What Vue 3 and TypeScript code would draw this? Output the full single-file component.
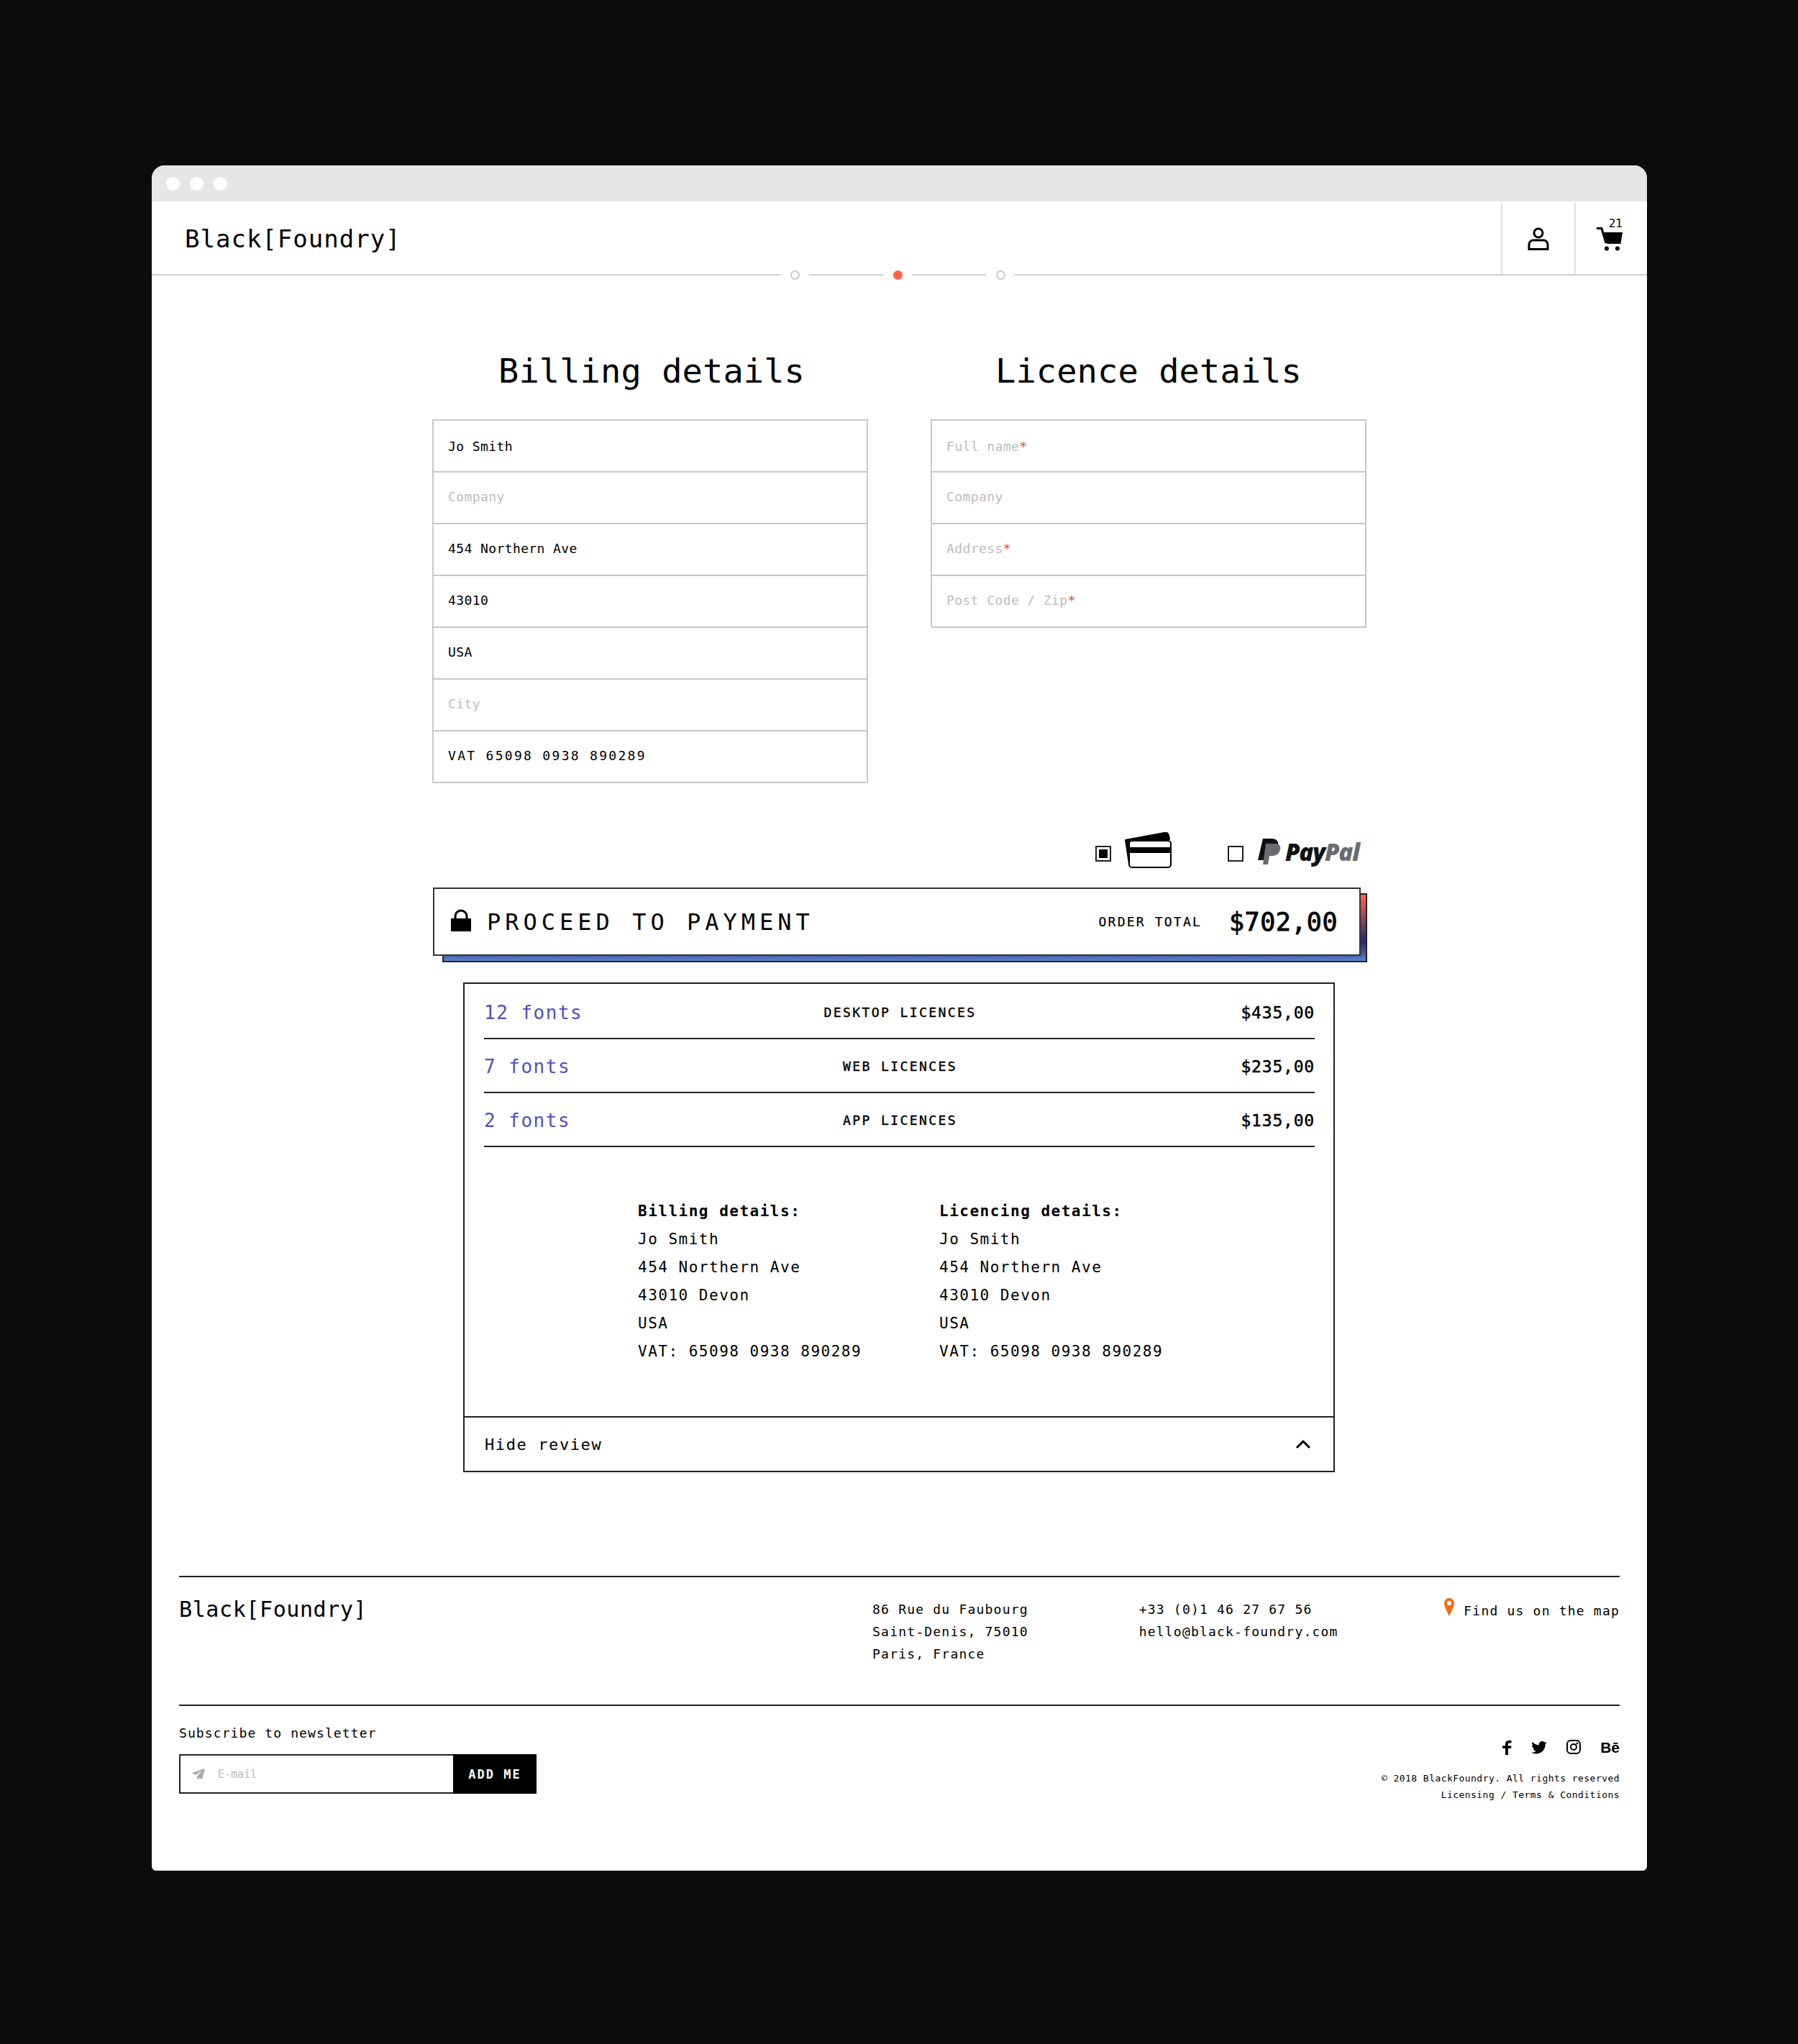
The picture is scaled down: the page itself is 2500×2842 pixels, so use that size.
<template>
  <div class="page">
    <div class="window">
      <div class="titlebar">
        <span v-for="i in 3" :key="i" class="light"></span>
      </div>

      <header class="topbar">
        <div class="logo">Black[Foundry]</div>
        <div class="top-icons">
          <div class="icon-cell">
            <svg width="30" height="32" viewBox="0 0 30 32" fill="none" stroke="#000" stroke-width="3">
              <circle cx="15" cy="8" r="6" />
              <path d="M2 30.5V24a6 6 0 0 1 6-6h14a6 6 0 0 1 6 6v6.500z" />
            </svg>
          </div>
          <div class="icon-cell cart">
            <span class="cart-count">21</span>
            <svg class="cart-icon" width="36" height="33" viewBox="0 0 36 33">
              <path d="M0 1.500h7l6 20.500" fill="none" stroke="#000" stroke-width="3" />
              <path d="M10 7h26l-2.500 16h-19z" fill="#000" />
              <circle cx="14" cy="29.500" r="3" fill="#000" />
              <circle cx="29" cy="29.500" r="3" fill="#000" />
            </svg>
          </div>
        </div>
      </header>

      <div class="steps">
        <span class="step-line first"></span>
        <span class="dot"></span>
        <span class="step-line"></span>
        <span class="dot active"></span>
        <span class="step-line"></span>
        <span class="dot"></span>
        <span class="step-line grow"></span>
      </div>

      <main class="content">
        <div class="forms">
          <section v-for="form in forms" :key="form.title" class="form-col">
            <h2>{{ form.title }}</h2>
            <div class="fields">
              <div v-for="f in form.fields" :key="f.label" class="field" :class="{ empty: !f.value, wide: f.wide }">
                {{ f.value || f.label }}<span v-if="f.required" class="req">*</span>
              </div>
            </div>
          </section>
        </div>

        <div class="pay-methods">
          <div class="method">
            <span class="check on"></span>
            <svg class="card" width="68" height="50" viewBox="0 0 68 50">
              <path d="M3 11 57 1q5-1 6 4l1 5H14v34h-6z" fill="#000" stroke="#000" stroke-width="2" stroke-linejoin="round" />
              <rect x="8" y="12" width="58" height="37" rx="4" fill="#fff" stroke="#000" stroke-width="2" />
              <rect x="8" y="21" width="58" height="8" fill="#000" />
            </svg>
          </div>
          <div class="method">
            <span class="check"></span>
            <svg class="pp-mark" width="32" height="36" viewBox="0 0 32 36">
              <path d="M7 0h12c7 0 10 4 9 9-1 7-6 10-12 10h-5l-2 11H0z" fill="#111" />
              <path d="M11 7h13c6 0 8 3 7 8-1 6-6 9-11 9h-4l-2 12H7z" fill="#6b6b70" />
            </svg>
            <span class="paypal"><b>Pay</b><i>Pal</i></span>
          </div>
        </div>

        <div class="proceed-wrap">
          <div class="proceed-shadow"></div>
          <div class="proceed">
            <svg class="lock" width="30" height="32" viewBox="0 0 30 32">
              <path d="M7 15V10a8 8 0 0 1 16 0v5" fill="none" stroke="#000" stroke-width="3" />
              <rect x="1" y="13" width="28" height="18" fill="#000" />
            </svg>
            <span class="proceed-label">PROCEED TO PAYMENT</span>
            <span class="order-label">ORDER TOTAL</span>
            <span class="order-total">$702,00</span>
          </div>
        </div>

        <div class="review">
          <div class="lines">
            <div v-for="l in lines" :key="l.type" class="line">
              <span class="line-count">{{ l.count }}</span>
              <span class="line-type">{{ l.type }}</span>
              <span class="line-price">{{ l.price }}</span>
            </div>
          </div>
          <div class="summary">
            <div v-for="s in summaries" :key="s.title" class="summary-col">
              <strong>{{ s.title }}</strong>
              <span v-for="row in address" :key="row">{{ row }}</span>
            </div>
          </div>
          <div class="hide-row">
            <span>Hide review</span>
            <svg width="22" height="14" viewBox="0 0 22 14" fill="none" stroke="#000" stroke-width="3">
              <path d="M2 12l9-9 9 9" />
            </svg>
          </div>
        </div>
      </main>

      <footer class="footer">
        <div class="foot-top">
          <div class="foot-logo">Black[Foundry]</div>
          <div class="foot-addr">86 Rue du Faubourg<br />Saint-Denis, 75010<br />Paris, France</div>
          <div class="foot-contact">+33 (0)1 46 27 67 56<br />hello@black-foundry.com</div>
          <div class="foot-map">
            <svg width="14" height="25" viewBox="0 0 14 25">
              <path fill-rule="evenodd" d="M7 0a7 7 0 0 1 7 7c0 4-4 12-7 18C4 19 0 11 0 7a7 7 0 0 1 7-7zm0 4a3 3 0 1 0 0 6 3 3 0 0 0 0-6z" fill="#f56a0e" />
            </svg>
            <span>Find us on the map</span>
          </div>
        </div>
        <div class="foot-bottom">
          <div class="subscribe">
            <div class="sub-title">Subscribe to newsletter</div>
            <div class="sub-form">
              <div class="sub-input">
                <svg width="18" height="16" viewBox="0 0 18 16">
                  <path d="M18 0 0 6l5 3 9-6-7 8v5l3-3 4 2z" fill="#aaa" />
                </svg>
                <span>E-mail</span>
              </div>
              <div class="sub-btn">ADD ME</div>
            </div>
          </div>
          <div class="foot-right">
            <div class="socials">
              <svg width="13" height="20" viewBox="0 0 13 20">
                <path d="M4 20v-9H0V7.500h4V5c0-3.400 2-5 5-5h3.500v3.500H10c-1.400 0-2 .6-2 2v2h4.500L12 11H8v9z" fill="#000" />
              </svg>
              <svg width="22" height="18" viewBox="0 0 24 20">
                <path d="M24 2.400c-.9.400-1.800.7-2.800.8 1-.6 1.800-1.600 2.200-2.700-1 .6-2 1-3.100 1.200A4.900 4.900 0 0 0 11.900 6.200C7.800 6 4.200 4 1.700.9c-1.300 2.200-.6 5.100 1.500 6.500-.8 0-1.500-.2-2.200-.6 0 2.300 1.600 4.400 3.900 4.900-.7.200-1.500.2-2.200.1.600 2 2.400 3.400 4.600 3.400A9.900 9.900 0 0 1 0 17.200 14 14 0 0 0 21.500 4.800c1-.7 1.800-1.500 2.500-2.400z" fill="#000" />
              </svg>
              <svg class="insta" width="20" height="20" viewBox="0 0 20 20" fill="none" stroke="#000" stroke-width="2">
                <rect x="1" y="1" width="18" height="18" rx="5" />
                <circle cx="10" cy="10" r="4" />
                <circle cx="15" cy="5" r=".6" fill="#000" />
              </svg>
              <span class="behance">Bē</span>
            </div>
            <div class="legal">© 2018 BlackFoundry. All rights reserved</div>
            <div class="legal">Licensing / Terms &amp; Conditions</div>
          </div>
        </div>
      </footer>
    </div>
  </div>
</template>

<script setup lang="ts">
interface Field {
  label: string;
  value?: string;
  required?: boolean;
  wide?: boolean;
}

const forms: { title: string; fields: Field[] }[] = [
  {
    title: "Billing details",
    fields: [
      { label: "Name", value: "Jo Smith" },
      { label: "Company" },
      { label: "Address", value: "454 Northern Ave" },
      { label: "Zip", value: "43010" },
      { label: "Country", value: "USA" },
      { label: "City" },
      { label: "VAT", value: "VAT 65098 0938 890289", wide: true },
    ],
  },
  {
    title: "Licence details",
    fields: [
      { label: "Full name", required: true },
      { label: "Company" },
      { label: "Address", required: true },
      { label: "Post Code / Zip", required: true },
    ],
  },
];

const lines = [
  { count: "12 fonts", type: "DESKTOP LICENCES", price: "$435,00" },
  { count: "7 fonts", type: "WEB LICENCES", price: "$235,00" },
  { count: "2 fonts", type: "APP LICENCES", price: "$135,00" },
];

const summaries = [{ title: "Billing details:" }, { title: "Licencing details:" }];
const address = ["Jo Smith", "454 Northern Ave", "43010 Devon", "USA", "VAT: 65098 0938 890289"];
</script>

<style>
html,
body {
  margin: 0;
  background: #0c0c0c;
}
</style>

<style scoped>
.page {
  height: 2842px;
  box-sizing: border-box;
  padding: 230px 210px 0 211px;
  font-family: "DejaVu Sans Mono", monospace;
  color: #000;
}

.window {
  height: 2371px;
  background: #fff;
  border-radius: 18px 18px 6px 6px;
  overflow: hidden;
  display: flex;
  flex-direction: column;
}

.titlebar {
  height: 50px;
  background: #e6e6e6;
  display: flex;
  align-items: center;
  gap: 14px;
  padding: 0 0 0 20px;
  flex: none;
}

.light {
  width: 19px;
  height: 19px;
  border-radius: 50%;
  background: #fff;
}

.topbar {
  height: 101px;
  display: flex;
  align-items: center;
  justify-content: space-between;
  padding-left: 46px;
  flex: none;
}

.logo {
  font-size: 34px;
  letter-spacing: 1px;
  line-height: 1;
  margin-top: 3px;
}

.top-icons {
  display: flex;
  height: 100%;
  padding-top: 2px;
  box-sizing: border-box;
}

.icon-cell {
  position: relative;
  width: 102px;
  box-sizing: border-box;
  border-left: 2px solid #e0e0e0;
  display: flex;
  align-items: center;
  justify-content: center;
}

.icon-cell.cart {
  width: 101px;
  padding-top: 2px;
}

.cart-icon {
  margin-right: 5px;
}

.cart-count {
  position: absolute;
  top: 19px;
  right: 34px;
  font-size: 16px;
}

.steps {
  height: 14px;
  margin-top: -6px;
  display: flex;
  align-items: center;
  flex: none;
}

.step-line {
  width: 103px;
  height: 2px;
  background: #ccc;
}

.step-line.first {
  width: 874px;
}

.step-line.grow {
  flex: 1;
}

.dot {
  width: 13px;
  height: 13px;
  box-sizing: border-box;
  border: 2px solid #c8c8c8;
  border-radius: 50%;
  margin: 0 13.5px;
}

.dot.active {
  background: #ff6347;
  border-color: #ff6347;
}

.content {
  flex: none;
  padding-top: 97px;
  display: flex;
  flex-direction: column;
  align-items: flex-start;
}

.forms {
  display: flex;
  gap: 87px;
  margin-left: 390px;
  height: 633px;
}

.form-col {
  width: 606px;
}

.form-col:first-child h2 {
  padding-left: 4px;
}

h2 {
  margin: 0 0 37px;
  font-size: 47px;
  font-weight: 400;
  letter-spacing: 0.1px;
  line-height: 60px;
  text-align: center;
}

.fields {
  border: 2px solid #c8c8c8;
}

.field {
  height: 72px;
  box-sizing: border-box;
  border-bottom: 2px solid #c8c8c8;
  padding: 0 0 3px 20px;
  display: flex;
  align-items: center;
  font-size: 18px;
  letter-spacing: 0.4px;
}

.field:first-child {
  padding-bottom: 0;
}

.field:last-child {
  height: 70px;
  border-bottom: 0;
}

.field.empty {
  color: #bdbdbd;
}

.field.wide {
  letter-spacing: 2.3px;
}

.req {
  color: #e5453a;
}

.pay-methods {
  margin: 36px 0 0 1312px;
  height: 60px;
  display: flex;
  gap: 77px;
}

.method {
  display: flex;
  align-items: center;
  gap: 17px;
}

.card {
  margin-top: -6px;
}

.pp-mark {
  margin-left: 3px;
  margin-top: -2px;
}

.check {
  width: 22px;
  height: 22px;
  box-sizing: border-box;
  border: 2px solid #222;
  margin-top: 4px;
}

.check.on {
  padding: 3px;
  background: #000;
  background-clip: content-box;
}

.paypal {
  font-family: "Open Sans", sans-serif;
  font-size: 33px;
  font-weight: 800;
  font-style: italic;
  margin-left: -11px;
  margin-top: -2px;
  letter-spacing: -1.2px;
}

.paypal b {
  color: #111;
  font-weight: 800;
}

.paypal i {
  color: #6b6b70;
}

.proceed-wrap {
  position: relative;
  width: 1290px;
  height: 95px;
  margin: 19px 0 0 391px;
}

.proceed-shadow {
  position: absolute;
  left: 13px;
  right: -9px;
  top: 8px;
  bottom: -9px;
  border: 2px solid #222;
  background: linear-gradient(180deg, #ff6347 0%, #26287c 72%, #5b82c8 100%);
}

.proceed {
  position: relative;
  height: 100%;
  box-sizing: border-box;
  border: 2px solid #333;
  background: #fff;
  display: flex;
  align-items: center;
  padding: 0 30px 0 22px;
}

.lock {
  margin-top: -4px;
}

.proceed-label {
  margin-left: 21px;
  font-size: 32px;
  letter-spacing: 6px;
  flex: 1;
}

.order-label {
  font-size: 18px;
  letter-spacing: 2.2px;
  margin-right: 38px;
  -webkit-text-stroke: 0.2px #000;
}

.order-total {
  font-size: 35px;
  letter-spacing: 0.5px;
  -webkit-text-stroke: 0.9px #000;
}

.review {
  width: 1212px;
  height: 681px;
  box-sizing: border-box;
  margin: 37px 0 0 433px;
  border: 2px solid #222;
  display: flex;
  flex-direction: column;
}

.lines {
  padding: 0 26px 0 27px;
}

.line {
  height: 75px;
  box-sizing: border-box;
  border-bottom: 2px solid #222;
  padding-top: 2px;
  display: grid;
  grid-template-columns: 1fr auto 1fr;
  align-items: center;
}

.line:first-child {
  height: 77px;
  padding-top: 4px;
}

.line-count {
  font-size: 26px;
  letter-spacing: 1.5px;
  color: #4f50c2;
}

.line-type {
  font-size: 18px;
  letter-spacing: 2.4px;
  margin-left: 2px;
  -webkit-text-stroke: 0.4px #000;
}

.line-price {
  font-size: 23px;
  letter-spacing: 0.8px;
  -webkit-text-stroke: 0.5px #000;
  text-align: right;
}

.summary {
  flex: 1;
  display: flex;
  padding: 70px 0 0 241px;
  gap: 109px;
}

.summary-col {
  display: flex;
  flex-direction: column;
  width: 310px;
  white-space: nowrap;
  font-size: 21px;
  letter-spacing: 1.5px;
  line-height: 39px;
}

.hide-row {
  height: 76px;
  box-sizing: border-box;
  border-top: 2px solid #222;
  display: flex;
  align-items: center;
  justify-content: space-between;
  padding: 0 31px 0 28px;
  font-size: 22px;
  letter-spacing: 1.6px;
}

.footer {
  flex: 1;
  margin-top: 144px;
  padding: 0 38px;
}

.foot-top {
  height: 181px;
  box-sizing: border-box;
  border-top: 2px solid #222;
  border-bottom: 2px solid #222;
  display: flex;
  padding-top: 29px;
  font-size: 18px;
  letter-spacing: 1.2px;
  line-height: 31px;
}

.foot-logo {
  width: 965px;
  font-size: 30px;
  letter-spacing: 0.6px;
}

.foot-addr {
  width: 371px;
}

.foot-contact {
  width: 425px;
}

.foot-map {
  display: flex;
  align-items: flex-start;
  gap: 13px;
  white-space: nowrap;
  height: 31px;
}

.foot-map span {
  margin-top: 2px;
}

.foot-bottom {
  display: flex;
  justify-content: space-between;
}

.sub-title {
  margin-top: 26px;
  font-size: 18px;
  letter-spacing: 1.1px;
  line-height: 24px;
}

.sub-form {
  margin-top: 17px;
  display: flex;
  width: 497px;
  height: 55px;
}

.sub-input {
  flex: 1;
  border: 2px solid #222;
  border-right: 0;
  display: flex;
  align-items: center;
  gap: 18px;
  padding-left: 16px;
  font-size: 15px;
  color: #bbb;
}

.sub-btn {
  width: 116px;
  background: #000;
  color: #fff;
  display: flex;
  align-items: center;
  justify-content: center;
  font-size: 17px;
  font-weight: 700;
  letter-spacing: 2px;
}

.foot-right {
  display: flex;
  flex-direction: column;
  align-items: flex-end;
  padding-top: 46px;
}

.socials {
  display: flex;
  align-items: center;
  gap: 27px;
  margin-bottom: 19px;
  height: 24px;
}

.insta {
  margin-top: -3px;
}

.behance {
  font-family: "Liberation Sans", sans-serif;
  font-weight: 700;
  font-size: 21px;
}

.legal {
  font-size: 13px;
  letter-spacing: 0.45px;
  line-height: 23px;
}
</style>
